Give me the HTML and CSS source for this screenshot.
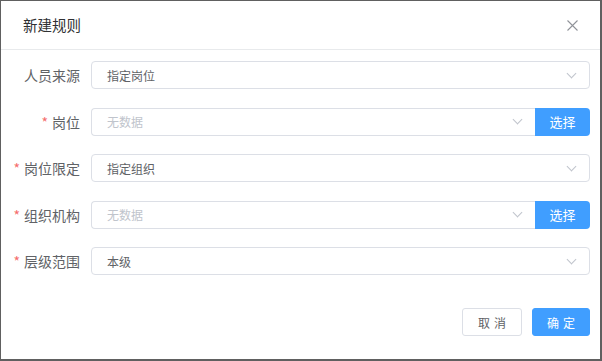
FILE: index.html
```html
<!DOCTYPE html>
<html lang="zh-CN">
<head>
    <meta charset="UTF-8">
    <title>新建规则</title>
    <link rel="stylesheet" href="styles.css">
</head>
<body>
    <div class="dialog">
        <div class="dialog-header">
            <span class="dialog-title">新建规则</span>
            <button class="close-btn" aria-label="关闭">
                <svg width="11" height="11" viewBox="0 0 11 11"><path d="M0.5 0.5L10.5 10.5M10.5 0.5L0.5 10.5" stroke="#909399" stroke-width="1.1" fill="none"/></svg>
            </button>
        </div>

        <div class="dialog-body">
            <div class="form-item">
                <label class="form-label">人员来源</label>
                <div class="form-control">
                    <div class="select">
                        <span class="select-value">指定岗位</span>
                        <span class="arrow"></span>
                    </div>
                </div>
            </div>
            <div class="form-item">
                <label class="form-label"><span class="required">*</span>岗位</label>
                <div class="form-control">
                    <div class="select with-btn">
                        <span class="select-value placeholder">无数据</span>
                        <span class="arrow"></span>
                    </div>
                    <button class="pick-btn">选择</button>
                </div>
            </div>
            <div class="form-item">
                <label class="form-label"><span class="required">*</span>岗位限定</label>
                <div class="form-control">
                    <div class="select">
                        <span class="select-value">指定组织</span>
                        <span class="arrow"></span>
                    </div>
                </div>
            </div>
            <div class="form-item">
                <label class="form-label"><span class="required">*</span>组织机构</label>
                <div class="form-control">
                    <div class="select with-btn">
                        <span class="select-value placeholder">无数据</span>
                        <span class="arrow"></span>
                    </div>
                    <button class="pick-btn">选择</button>
                </div>
            </div>
            <div class="form-item">
                <label class="form-label"><span class="required">*</span>层级范围</label>
                <div class="form-control">
                    <div class="select">
                        <span class="select-value">本级</span>
                        <span class="arrow"></span>
                    </div>
                </div>
            </div>
        </div>

        <div class="dialog-footer">
            <button class="btn">取消</button>
            <button class="btn btn-primary">确定</button>
        </div>
    </div>
</body>
</html>
```

FILE: styles.css
```css
body {
    margin: 0;
    padding: 1px 2px 2px 1px;
    background-color: #606060;
    font-family: "Noto Sans CJK SC", "Noto Sans", sans-serif;
}
.dialog {
    width: 599px;
    height: 358px;
    background-color: white;
    box-sizing: border-box;
    position: relative;
}
.dialog-header {
    height: 48px;
    border-bottom: 1px solid #e8eaec;
    display: flex;
    align-items: center;
    justify-content: space-between;
    padding: 0 22px 0 22px;
}
.dialog-title {
    font-size: 14.5px;
    color: #303133;
    margin-top: -1px;
}
.close-btn {
    border: none;
    background: none;
    padding: 0;
    display: flex;
    cursor: pointer;
}
.dialog-body {
    padding: 11px 10px 0 9px;
    display: flex;
    flex-direction: column;
    gap: 18.5px;
}
.form-item {
    display: flex;
    align-items: center;
    height: 28px;
}
.form-label {
    width: 70px;
    margin-right: 11px;
    text-align: right;
    font-size: 14px;
    color: #606266;
    white-space: nowrap;
}
.required {
    color: #f56c6c;
    margin-right: 4px;
}
.form-control {
    flex: 1;
    display: flex;
    height: 28px;
}
.select {
    flex: 1;
    box-sizing: border-box;
    height: 28px;
    border: 1px solid #dcdfe6;
    border-radius: 4px;
    display: flex;
    align-items: center;
    justify-content: space-between;
    padding: 0 12px 0 15px;
}
.select.with-btn {
    border-top-right-radius: 0;
    border-bottom-right-radius: 0;
    border-right: none;
}
.select-value {
    font-size: 12px;
    color: #606266;
}
.placeholder {
    color: #c0c4cc;
}
.arrow {
    width: 6px;
    height: 6px;
    border-right: 1px solid #c0c4cc;
    border-bottom: 1px solid #c0c4cc;
    transform: rotate(45deg);
    margin-top: -4px;
    margin-right: 2px;
}
.pick-btn {
    width: 55px;
    height: 28px;
    border: none;
    border-radius: 0 4px 4px 0;
    background-color: #409eff;
    color: white;
    font-family: inherit;
    font-size: 13px;
    padding: 0;
}
.dialog-footer {
    position: absolute;
    right: 10px;
    bottom: 23px;
    display: flex;
    gap: 10px;
}
.btn {
    width: 60px;
    height: 28px;
    box-sizing: border-box;
    border: 1px solid #dcdfe6;
    border-radius: 3px;
    background-color: white;
    color: #606266;
    font-family: inherit;
    font-size: 12px;
    letter-spacing: 4px;
    text-indent: 4px;
    padding: 0;
}
.btn-primary {
    width: 58px;
    border-color: #409eff;
    background-color: #409eff;
    color: white;
}
```
